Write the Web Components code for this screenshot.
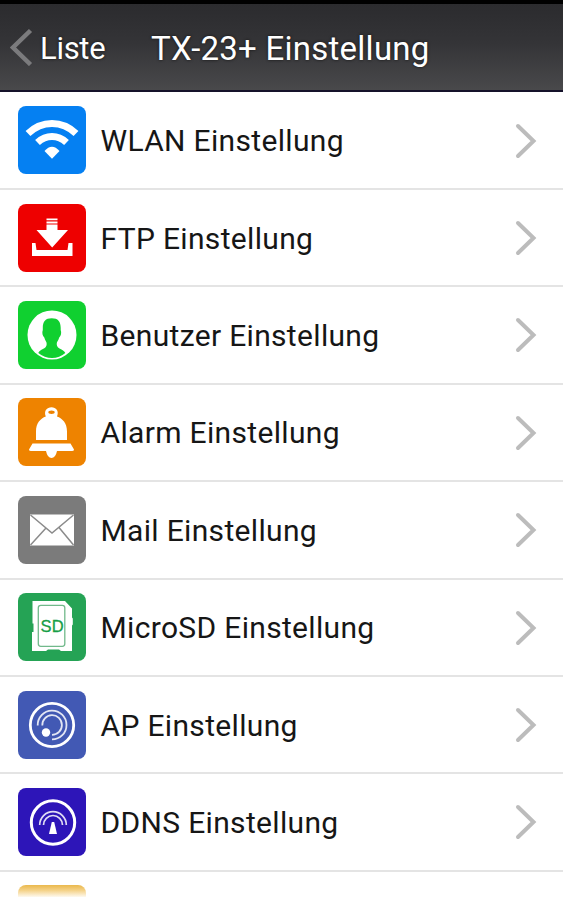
<!DOCTYPE html>
<html lang="de">
<head>
<meta charset="utf-8">
<title>TX-23+ Einstellung</title>
<style>
  body {
    margin: 0;
    height: 900px;
    overflow: hidden;
    background: #fff;
    font-family: Roboto, "Noto Sans", sans-serif;
  }
</style>
</head>
<body>
<settings-page>
  <title-bar slot="header" back="Liste">TX-23+ Einstellung</title-bar>
  <settings-row icon="wlan" color="#0580f2">WLAN Einstellung</settings-row>
  <settings-row icon="ftp" color="#ee0000">FTP Einstellung</settings-row>
  <settings-row icon="user" color="#10d030">Benutzer Einstellung</settings-row>
  <settings-row icon="alarm" color="#ee8300">Alarm Einstellung</settings-row>
  <settings-row icon="mail" color="#7b7b7b">Mail Einstellung</settings-row>
  <settings-row icon="sd" color="#25a355">MicroSD Einstellung</settings-row>
  <settings-row icon="ap" color="#4259b4">AP Einstellung</settings-row>
  <settings-row icon="ddns" color="#2d15b8">DDNS Einstellung</settings-row>
  <settings-row icon="none" color="linear-gradient(#eab84c, #f4d083 5px, #fff 13px)"></settings-row>
</settings-page>

<script>
// All glyphs are drawn on a 68x68 grid, the size of the tile.
const ICONS = {
  wlan: `
    <g fill="none" stroke="#fff" stroke-width="7">
      <path d="M10 27.500Q20.500 17.500 34 17.500T58 27.500"/>
      <path d="M19.500 36.500Q26 30.500 34 30.500T48.500 36.500"/>
    </g>
    <path d="M26.500 45Q34 36.500 41.500 45L34 52.700Z" fill="#fff"/>`,
  ftp: `
    <g fill="#fff">
      <path d="M28.500 14.500h11v1.700h-11zM28.500 17.400h11v2h-11zM28.500 20.500h11v5.500H50L34.200 43.500 18.500 26h10z"/>
      <path d="M14 39h3.500l1 7h31l1-7H54.500v13H14z"/>
    </g>`,
  user: `
    <circle cx="34" cy="34" r="24.500" fill="#fff"/>
    <path d="M33.700 17.300C27.500 17.300 24.800 20.500 24.800 27V29C23.800 31.500 24.500 35 26.300 36.500 27 39.500 28.700 40.500 28.700 43 28.700 48.500 21.500 48 20.300 52Q26.500 57 34 57T47.300 52C46 48 38.700 48.500 38.700 43 38.700 40.500 40.500 39.500 41.200 36.500 43 35 43.700 31.500 42.700 29V27C42.700 20.500 40 17.300 33.700 17.300z" fill="#10d030"/>`,
  alarm: `
    <path d="M18 42V33.500C18 25 22.500 20.500 27.800 18.500 25.500 13 29 9.300 33.500 9.300S41.300 13 39 18.500C44.500 20.500 49 25 49 33.500V42z" fill="#fff"/>
    <ellipse cx="33.500" cy="14.300" rx="3.200" ry="1.700" fill="#ee8300"/>
    <path d="M14.500 45.500h38L56 51.500Q56 53 54 53H39Q37.500 60 33.500 60T28 53H13Q11 53 11 51.500z" fill="#fff"/>`,
  mail: `
    <rect x="12" y="18.500" width="44" height="31" fill="#fff"/>
    <path d="M12.500 19L34 37 55.500 19M12.500 49L28 32M55.500 49L41 31.500" fill="none" stroke="#8b8b8b" stroke-width="1.500"/>`,
  sd: `
    <path d="M14.500 8H47l7 7.500v9l.8 1v6l-.8 1V58H43l-2-1.500H30L28 58H14V39h1.500v-8.500H14.500z" fill="#fff"/>
    <rect x="20.300" y="12.300" width="26.500" height="41" rx="2.500" fill="none" stroke="#71b98b" stroke-width="1.300"/>
    <text x="34.200" y="38.500" text-anchor="middle" font-family="Liberation Sans, sans-serif" font-size="16.500" fill="#179e47" stroke="#179e47" stroke-width=".3">SD</text>`,
  ap: `
    <g fill="none" stroke="#fff">
      <circle cx="34" cy="34" r="21.700" stroke-width="2.800"/>
      <path d="M19.700 34.500A14.400 14.400 0 1 1 34 48.400" stroke-width="1.800" opacity=".85"/>
      <path d="M24.300 34.500A9.800 9.800 0 1 1 34 43.800" stroke-width="1.800" opacity=".85"/>
    </g>
    <circle cx="28" cy="41.500" r="4.200" fill="#fff"/>`,
  ddns: `
    <g fill="none" stroke="#fff">
      <circle cx="35" cy="34.500" r="21.700" stroke-width="3"/>
      <g stroke-width="1.700" opacity=".85">
        <path d="M21.700 37A13.300 13.300 0 0 1 48.300 37"/>
        <path d="M25.500 37A9.500 9.500 0 0 1 44.500 37"/>
      </g>
    </g>
    <path d="M33.800 34h2.400L39 46H31z" fill="#fff"/>`,
  none: ""
};

class SettingsPage extends HTMLElement {
  constructor() {
    super();
    this.attachShadow({ mode: "open" });
    this.shadowRoot.innerHTML = `
      <style>
        :host {
          display: flex;
          flex-direction: column;
          height: 900px;
          overflow: hidden;
        }
        main {
          display: grid;
          grid-auto-rows: 97.400px;
          padding-top: .6px;
          height: 804px;
          overflow: hidden;
        }
      </style>
      <slot name="header"></slot>
      <main><slot></slot></main>
    `;
  }
}

class TitleBar extends HTMLElement {
  connectedCallback() {
    this.attachShadow({ mode: "open" });
    this.shadowRoot.innerHTML = `
      <style>
        :host {
          display: flex;
          align-items: center;
          flex: none;
          box-sizing: border-box;
          height: 92px;
          padding-left: 10px;
          border-top: 4px solid #000;
          border-bottom: 2px solid #15122a;
          background: linear-gradient(#2b2b2e, #343437 45%, #49494b);
          color: #fff;
          font-size: 31px;
          text-shadow: 0 0 3px #111;
        }
        svg { flex: none; width: 23px; height: 38px; }
        .back { width: 111px; padding-left: 7px; }
        .back, .title { white-space: nowrap; padding-top: 3px; }
        .back { letter-spacing: -.3px; }
        .title { font-size: 33px; letter-spacing: .25px; }
      </style>
      <svg viewBox="0 0 23 38"><path d="M20.500 2.500L3 19.500 20.500 36.500" fill="none" stroke="#7b7b7d" stroke-width="4.500"/></svg>
      <span class="back">${this.getAttribute("back")}</span>
      <span class="title"><slot></slot></span>
    `;
  }
}

class SettingsRow extends HTMLElement {
  connectedCallback() {
    const color = this.getAttribute("color");
    this.attachShadow({ mode: "open" });
    this.shadowRoot.innerHTML = `
      <style>
        :host {
          display: flex;
          align-items: flex-start;
          box-sizing: border-box;
          padding: 13.600px 26px 0 18px;
          border-bottom: 2px solid #e4e4e4;
          color: #161616;
          font-size: 30px;
          letter-spacing: .33px;
        }
        .tile {
          flex: none;
          width: 68px;
          height: 68px;
          border-radius: 8px;
          background: ${color};
        }
        .tile svg { display: block; }
        .label {
          flex: 1;
          padding-left: 14.500px;
          line-height: 69px;
          white-space: nowrap;
        }
        .arrow { flex: none; width: 22px; height: 36px; margin-top: 16.500px; }
      </style>
      <div class="tile"><svg width="68" height="68" viewBox="0 0 68 68">${ICONS[this.getAttribute("icon")]}</svg></div>
      <span class="label"><slot></slot></span>
      <svg class="arrow" viewBox="0 0 22 36"><path d="M3 3L18.500 18 3 33" fill="none" stroke="#bcbcbc" stroke-width="4" stroke-linecap="round"/></svg>
    `;
  }
}

customElements.define("settings-page", SettingsPage);
customElements.define("title-bar", TitleBar);
customElements.define("settings-row", SettingsRow);
</script>
</body>
</html>
